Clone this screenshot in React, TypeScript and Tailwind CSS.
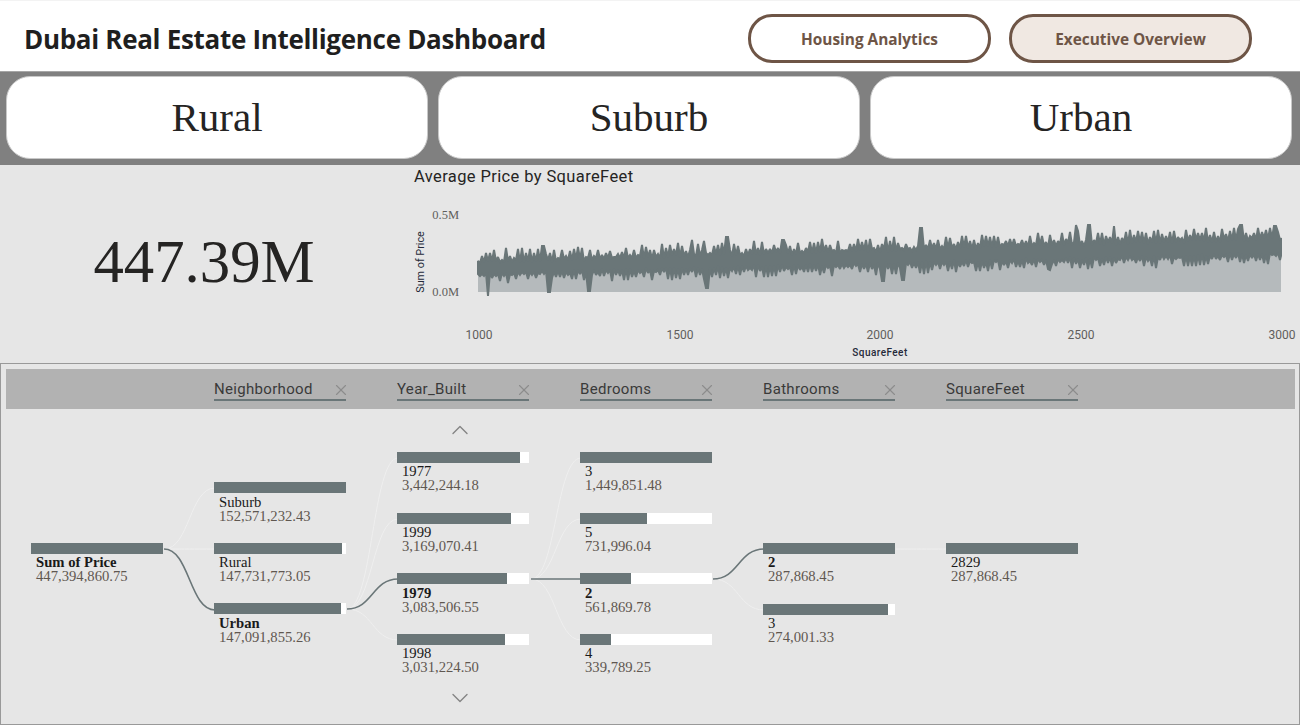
import React from "react";
import { ChevronUp, ChevronDown, X } from "lucide-react";

const serif = "font-['Liberation_Serif',serif]";
const din = "font-['Roboto',sans-serif]";

const topSpikes: Record<number, number> = { 543: 246, 692: 240, 704: 241, 727: 237, 783: 240, 921: 228, 1076: 225, 1089: 225, 1114: 226, 1241: 225, 1275: 226 };
const lowSpikes: Record<number, number> = { 488: 296, 549: 292, 589: 291, 707: 288, 883: 281, 903: 280, 1050: 270, 1200: 265 };

function bandPath() {
  let s = 987654;
  const r = () => {
    s = (s + 0x6d2b79f5) | 0;
    let t = Math.imul(s ^ (s >>> 15), 1 | s);
    t = (t + Math.imul(t ^ (t >>> 7), 61 | t)) ^ t;
    return ((t ^ (t >>> 14)) >>> 0) / 4294967296;
  };
  const top: [number, number][] = [];
  const low: [number, number][] = [];
  const nearby = (m: Record<number, number>, x: number) => {
    for (const k of Object.keys(m)) if (Math.abs(Number(k) - x) <= 1) return m[Number(k)];
    return null;
  };
  let x = 478;
  let i = 0;
  while (x < 1281) {
    const f = (x - 478) / 803;
    const t0 = 261 - 24 * f;
    const b0 = 275 - 20 * f;
    const up = i % 2 === 0;
    const t = nearby(topSpikes, x) ?? (up ? t0 - r() * 12 : t0 + r() * 3);
    const b = nearby(lowSpikes, x) ?? (up ? b0 - r() * 3 : b0 + r() * 10);
    top.push([x, Math.round(t)]);
    low.push([x, Math.round(b)]);
    x += 2;
    i += 1;
  }
  top.push([1281, 238]);
  low.push([1281, 256]);
  return { top, low };
}

function Chart() {
  const { top, low } = bandPath();
  const topLine = top.map((p) => p.join(",")).join(" ");
  const band = [...top, ...[...low].reverse()].map((p) => p.join(",")).join(" ");
  const ticks = [[479, "1000"], [680, "1500"], [880, "2000"], [1081, "2500"], [1282, "3000"]] as const;
  return (
    <svg className="absolute left-0 top-0" width="1300" height="198" viewBox="0 165 1300 198">
      <polygon points={`478,292 ${topLine} 1281,292`} fill="#b5babc" />
      <polygon points={band} fill="#6a7678" stroke="#6a7678" strokeWidth="2" strokeLinejoin="miter" strokeMiterlimit="2" />
      <text x="459" y="219" textAnchor="end" fontFamily="Liberation Serif" fontSize="12.5" fill="#605e5c">0.5M</text>
      <text x="459" y="296" textAnchor="end" fontFamily="Liberation Serif" fontSize="12.5" fill="#605e5c">0.0M</text>
      <text x="0" y="0" transform="translate(424 262) rotate(-90)" textAnchor="middle" fontFamily="Roboto" fontSize="10.8" fill="#252a3a">Sum of Price</text>
      {ticks.map(([x, t]) => (
        <text key={t} x={x} y="339" textAnchor="middle" fontFamily="Roboto" fontSize="12" fill="#605e5c">{t}</text>
      ))}
      <text x="880" y="356" textAnchor="middle" fontFamily="Roboto" fontWeight="500" fontSize="10" letterSpacing="0.45" fill="#252a3a">SquareFeet</text>
    </svg>
  );
}

function Curve({ a, b, on }: { a: [number, number]; b: [number, number]; on?: boolean }) {
  const m = (a[0] + b[0]) / 2;
  return (
    <path
      d={`M${a[0]} ${a[1]}C${m} ${a[1]} ${m} ${b[1]} ${b[0]} ${b[1]}`}
      fill="none"
      stroke={on ? "#6a7678" : "#efefef"}
      strokeWidth={on ? 1.6 : 1}
    />
  );
}

function Connectors() {
  return (
    <svg className="absolute left-0 top-0" width="1300" height="362" viewBox="0 363 1300 362">
      <Curve a={[163, 548]} b={[214, 487]} />
      <Curve a={[163, 548]} b={[214, 548]} />
      <Curve a={[346, 608]} b={[397, 457]} />
      <Curve a={[346, 608]} b={[397, 518]} />
      <Curve a={[346, 608]} b={[397, 639]} />
      <Curve a={[530, 578]} b={[580, 457]} />
      <Curve a={[530, 578]} b={[580, 518]} />
      <Curve a={[530, 578]} b={[580, 639]} />
      <Curve a={[712, 578]} b={[763, 609]} />
      <Curve a={[895, 548]} b={[946, 548]} />
      <Curve a={[163, 548]} b={[214, 609]} on />
      <Curve a={[346, 608]} b={[397, 578]} on />
      <Curve a={[530, 578]} b={[580, 578]} on />
      <Curve a={[712, 578]} b={[763, 548]} on />
    </svg>
  );
}

function Node({ name, value, w, bold, pt }: { name: string; value: string; w: string; bold?: boolean; pt: string }) {
  return (
    <div className="h-[60.67px]">
      <div className="h-[11px] w-full bg-white">
        <div className={`h-full bg-[#6a7678] ${w}`} />
      </div>
      <div className={`pl-[5px] text-[14.67px] leading-[14px] ${pt} ${serif}`}>
        <div className={`text-[#1a1a1a] ${bold ? "font-bold" : ""}`}>{name}</div>
        <div className="text-[#5f5750]">{value}</div>
      </div>
    </div>
  );
}

const labels = ["Neighborhood", "Year_Built", "Bedrooms", "Bathrooms", "SquareFeet"];

export default function App() {
  return (
    <div className="flex h-[725px] w-[1300px] flex-col overflow-hidden bg-[#e6e6e6]">
      <header className="flex h-[71px] items-center justify-between border-t border-[#f3f3f3] bg-white pl-[24px] pr-[48px] pt-[5px]">
        <h1 className="pt-[1px] font-['Open_Sans',sans-serif] text-[26px] font-bold tracking-[-0.31px] text-[#1f1f1f]">
          Dubai Real Estate Intelligence Dashboard
        </h1>
        <div className="flex gap-[18px]">
          <button className="h-[49px] w-[243px] rounded-[24px] border-[3px] border-[#6e5546] bg-white pt-[2px] font-['Open_Sans',sans-serif] text-[15.4px] font-bold text-[#6e5546]">
            Housing Analytics
          </button>
          <button className="h-[49px] w-[243px] rounded-[24px] border-[3px] border-[#6e5546] bg-[#f0e8e2] pt-[2px] font-['Open_Sans',sans-serif] text-[15.4px] font-bold text-[#6e5546]">
            Executive Overview
          </button>
        </div>
      </header>

      <section className="grid h-[94px] grid-cols-3 gap-[10px] border-t border-[#a6a6a6] bg-[#808080] pb-[6px] pl-[6px] pr-[8px] pt-[4px]">
        {["Rural", "Suburb", "Urban"].map((t) => (
          <div key={t} className={`flex items-center justify-center rounded-[24px] border border-[#c8c8c8] bg-white text-[41px] text-[#252423] ${serif}`}>
            {t}
          </div>
        ))}
      </section>

      <section className="relative flex h-[198px] bg-[#e6e6e6]">
        <Chart />
        <div className={`relative flex h-[194px] w-[408px] items-center justify-center text-[60.8px] text-[#252423] ${serif}`}>
          447.39M
        </div>
        <div className={`relative pl-[6px] pt-[2px] text-[16.5px] leading-[20px] tracking-[0.38px] text-[#252423] ${din}`}>
          Average Price by SquareFeet
        </div>
      </section>

      <section className="relative flex-1 border border-[#999999] pt-[5px]">
        <Connectors />
        <div className={`mx-[5px] flex h-[40px] w-[1289px] gap-[51px] bg-[#b2b2b2] pl-[208px] ${din}`}>
          {labels.map((l) => (
            <div key={l} className="mt-[9px] flex h-[23px] w-[132px] items-center justify-between border-b-2 border-[#6a7678] pt-[1px] text-[15px] tracking-[0.32px] text-[#3a3a3a]">
              <span>{l}</span>
              <X size={18} strokeWidth={1.5} className="-mr-[4px] mt-[2px] text-[#8c8c8c]" />
            </div>
          ))}
        </div>
        <div className="relative flex gap-[51px] pl-[30px]">
          <div className="w-[132px] pt-[134px]">
            <Node pt="pt-[1.4px]" name="Sum of Price" value="447,394,860.75" w="w-full" bold />
          </div>
          <div className="w-[132px] pt-[73px]">
            <Node pt="pt-[1.7px]" name="Suburb" value="152,571,232.43" w="w-full" />
            <Node pt="pt-[1.7px]" name="Rural" value="147,731,773.05" w="w-[97%]" />
            <Node pt="pt-[1.7px]" name="Urban" value="147,091,855.26" w="w-[96.4%]" bold />
          </div>
          <div className="w-[132px]">
            <div className="flex h-[43px] items-center justify-center pr-[6px]">
              <ChevronUp size={28} strokeWidth={1.2} className="-mt-[2px] text-[#858585]" />
            </div>
            <Node pt="pt-[1.3px]" name="1977" value="3,442,244.18" w="w-[93%]" />
            <Node pt="pt-[1.3px]" name="1999" value="3,169,070.41" w="w-[86%]" />
            <Node pt="pt-[1.3px]" name="1979" value="3,083,506.55" w="w-[83.5%]" bold />
            <Node pt="pt-[1.3px]" name="1998" value="3,031,224.50" w="w-[82%]" />
            <div className="flex h-[6px] items-center justify-center pr-[6px]">
              <ChevronDown size={28} strokeWidth={1.2} className="text-[#858585]" />
            </div>
          </div>
          <div className="w-[132px] pt-[43px]">
            <Node pt="pt-[1.3px]" name="3" value="1,449,851.48" w="w-full" />
            <Node pt="pt-[1.3px]" name="5" value="731,996.04" w="w-[50.4%]" />
            <Node pt="pt-[1.3px]" name="2" value="561,869.78" w="w-[38.6%]" bold />
            <Node pt="pt-[1.3px]" name="4" value="339,789.25" w="w-[23.4%]" />
          </div>
          <div className="w-[132px] pt-[134px]">
            <Node pt="pt-[1.4px]" name="2" value="287,868.45" w="w-full" bold />
            <Node pt="pt-[1.4px]" name="3" value="274,001.33" w="w-[95%]" />
          </div>
          <div className="w-[132px] pt-[134px]">
            <Node pt="pt-[1.4px]" name="2829" value="287,868.45" w="w-full" />
          </div>
        </div>
      </section>
    </div>
  );
}
